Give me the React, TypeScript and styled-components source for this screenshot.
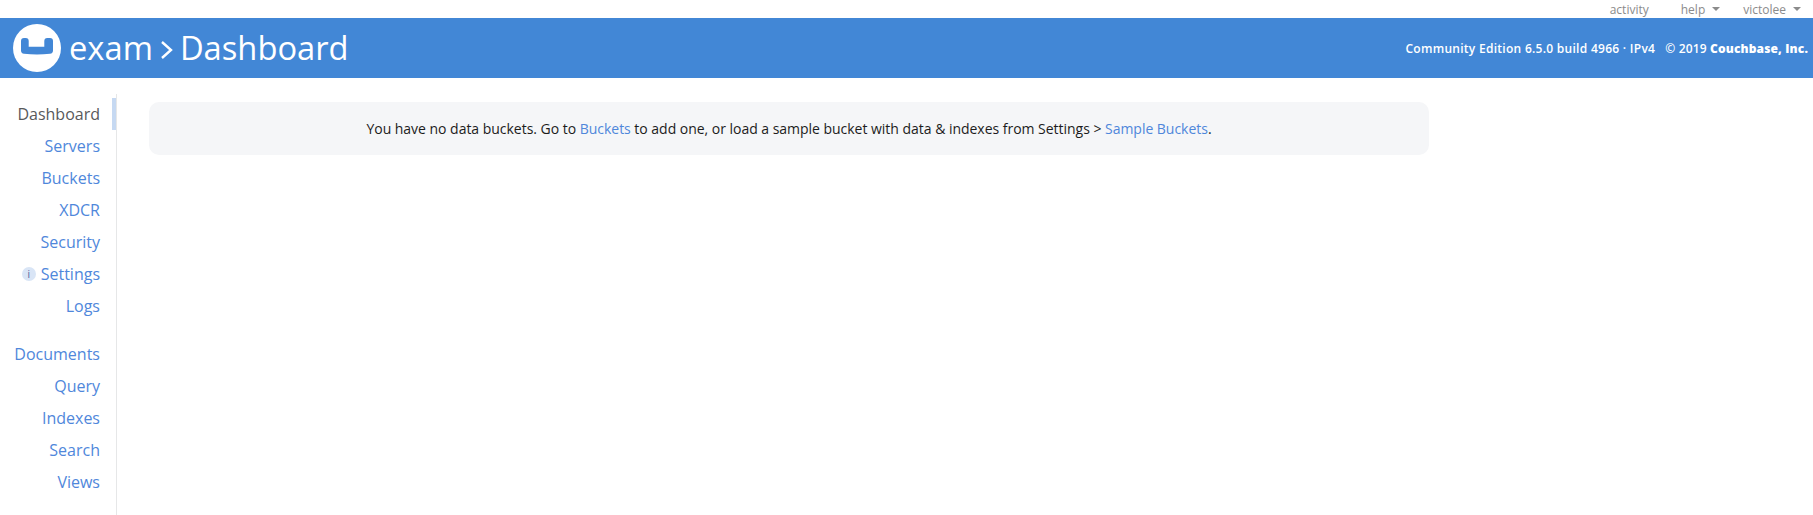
import React from 'react';
import styled, { createGlobalStyle } from 'styled-components';

const GlobalStyle = createGlobalStyle`
    html, body {
        margin: 0;
        padding: 0;
        background: #fff;
        font-family: "Open Sans", "Liberation Sans", sans-serif;
    }
`;

const Page = styled.div`
    height: 515px;
    display: flex;
    flex-direction: column;
    overflow: hidden;
`;

const TopLinks = styled.div`
    height: 18px;
    display: flex;
    justify-content: flex-end;
    align-items: center;
    padding-right: 12px;
    font-size: 12px;
    color: #8b8b8b;
`;

const TopLink = styled.span<{ $gap: number }>`
    display: flex;
    align-items: center;
    margin-left: ${(p) => p.$gap}px;
`;

const Caret = styled.span`
    width: 0;
    height: 0;
    margin-left: 7px;
    border-left: 4px solid transparent;
    border-right: 4px solid transparent;
    border-top: 4px solid #8b8b8b;
`;

const Header = styled.header`
    height: 60px;
    flex: none;
    background: #4287d6;
    color: #fff;
    display: flex;
    align-items: center;
    justify-content: space-between;
    padding: 0 5px 0 13px;
`;

const Brand = styled.div`
    display: flex;
    align-items: center;
`;

const Title = styled.h1`
    margin: 0 0 0 8px;
    font-size: 32.7px;
    font-weight: 400;
    line-height: 48px;
    display: flex;
    align-items: center;
`;

const Chevron = styled.svg`
    width: 14px;
    height: 24px;
    margin: 3px 6px 0 7px;
`;

const Version = styled.div`
    font-size: 12px;
    font-weight: 600;
    display: flex;
    gap: 10px;
`;

const Build = styled.span`
    letter-spacing: 0.28px;
`;

const Copyright = styled.span`
    letter-spacing: 0.15px;
`;

const Body = styled.div`
    flex: 1;
    display: flex;
    align-items: stretch;
`;

const Sidebar = styled.nav`
    width: 116px;
    flex: none;
    margin-top: 16px;
    padding-top: 4px;
    border-right: 1px solid #e6e7e8;
    display: flex;
    flex-direction: column;
`;

const NavGroup = styled.div`
    display: flex;
    flex-direction: column;
    margin-bottom: 16px;
`;

const NavItem = styled.a<{ $active?: boolean }>`
    height: 32px;
    display: flex;
    align-items: center;
    justify-content: flex-end;
    padding-right: 12px;
    font-size: 16px;
    color: ${(p) => (p.$active ? '#58595b' : '#4f87db')};
    border-right: 4px solid ${(p) => (p.$active ? '#c6d9f2' : 'transparent')};
`;

const InfoBadge = styled.span`
    width: 14px;
    height: 14px;
    margin-right: 5px;
    border-radius: 50%;
    background: #d9e5f6;
    color: #55609a;
    font-size: 10px;
    line-height: 14px;
    text-align: center;
`;

const Main = styled.main`
    flex: 1;
    padding: 24px 0 0 32px;
`;

const Notice = styled.div`
    width: 1280px;
    height: 53px;
    background: #f5f6f8;
    border-radius: 10px;
    display: flex;
    align-items: center;
    justify-content: center;
    font-size: 14px;
    letter-spacing: -0.025px;
    color: #1c1c1c;
    white-space: pre;
`;

const NoticeLink = styled.a`
    color: #4f87db;
`;

const Logo = () => (
	<svg width='48' height='48' viewBox='0 0 48 48'>
		<circle cx='24' cy='24' r='24' fill='#fff' />
		<path
			d='M8 17c0-2 1-3 3-3h1.700c2 0 3 1 3 3v5.700h15.600V17c0-2 1-3 3-3H37c2 0 3 1 3 3v9.500c0 2-1 3.100-3 3.300-4.300.4-8.700.6-13 .6s-8.700-.2-13-.6c-2-.2-3-1.300-3-3.300z'
			fill='#4287d6'
		/>
	</svg>
);

const App = (): JSX.Element => {
	return (
		<Page>
			<GlobalStyle />
			<TopLinks>
				<TopLink $gap={0}>activity</TopLink>
				<TopLink $gap={32}>help<Caret /></TopLink>
				<TopLink $gap={23}>victolee<Caret /></TopLink>
			</TopLinks>
			<Header>
				<Brand>
					<Logo />
					<Title>
						exam
						<Chevron viewBox='0 0 14 24'>
							<path d='M2 4l9 8-9 8' fill='none' stroke='#fff' strokeWidth='2.4' />
						</Chevron>
						Dashboard
					</Title>
				</Brand>
				<Version>
					<Build>Community Edition 6.5.0 build 4966 · IPv4</Build>
					<Copyright>© 2019 <strong>Couchbase, Inc.</strong></Copyright>
				</Version>
			</Header>
			<Body>
				<Sidebar>
					<NavGroup>
						<NavItem $active>Dashboard</NavItem>
						<NavItem>Servers</NavItem>
						<NavItem>Buckets</NavItem>
						<NavItem>XDCR</NavItem>
						<NavItem>Security</NavItem>
						<NavItem><InfoBadge>i</InfoBadge>Settings</NavItem>
						<NavItem>Logs</NavItem>
					</NavGroup>
					<NavGroup>
						<NavItem>Documents</NavItem>
						<NavItem>Query</NavItem>
						<NavItem>Indexes</NavItem>
						<NavItem>Search</NavItem>
						<NavItem>Views</NavItem>
					</NavGroup>
				</Sidebar>
				<Main>
					<Notice>
						You have no data buckets. Go to <NoticeLink>Buckets</NoticeLink> to add one, or load a sample bucket with data &amp; indexes from Settings &gt; <NoticeLink>Sample Buckets</NoticeLink>.
					</Notice>
				</Main>
			</Body>
		</Page>
	);
};

export default App;
